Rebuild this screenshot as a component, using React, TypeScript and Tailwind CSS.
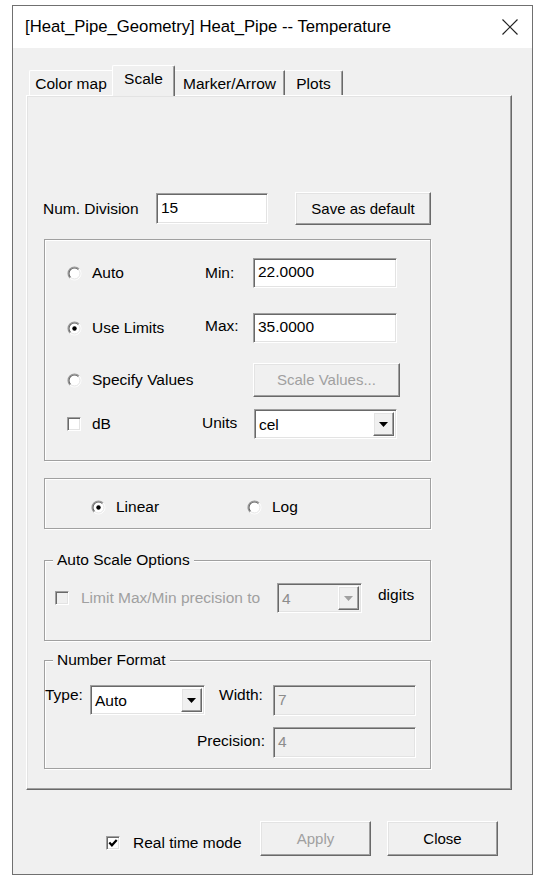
import React from 'react';

const sunken =
  'border border-t-[#a0a0a0] border-l-[#a0a0a0] border-b-white border-r-white shadow-[inset_1px_1px_0_#696969,inset_-1px_-1px_0_#e3e3e3]';
const raised =
  'border border-t-white border-l-white border-b-[#696969] border-r-[#696969] shadow-[inset_-1px_-1px_0_#a0a0a0,inset_1px_1px_0_#e3e3e3]';
const etched = 'border border-[#a0a0a0] shadow-[inset_1px_1px_0_#fff,1px_1px_0_#fff]';

function Radio({ checked }: { checked?: boolean }) {
  return (
    <svg width="15" height="15" viewBox="0 0 15 15" className="shrink-0 -ml-[1px]">
      <circle cx="7.5" cy="7.5" r="6.5" fill="#fff" />
      <path d="M2.9 12.1A6.5 6.5 0 0 1 12.1 2.9" fill="none" stroke="#9a9a9a" strokeWidth="1.1" />
      <path d="M3.6 11.4A5.5 5.5 0 0 1 11.4 3.6" fill="none" stroke="#5f5f5f" strokeWidth="1.1" />
      <path d="M12.1 2.9A6.5 6.5 0 0 1 2.9 12.1" fill="none" stroke="#fff" />
      <path d="M11.4 3.6A5.5 5.5 0 0 1 3.6 11.4" fill="none" stroke="#e3e3e3" />
      {checked && <circle cx="7.5" cy="7.5" r="2.2" fill="#000" />}
    </svg>
  );
}

function Check({ checked, disabled }: { checked?: boolean; disabled?: boolean }) {
  return (
    <span
      className={`w-[14px] h-[14px] shrink-0 flex items-center justify-center ${sunken} ${
        disabled ? 'bg-[#f0f0f0]' : 'bg-white'
      }`}
    >
      {checked && (
        <svg width="10" height="10" viewBox="0 0 10 10">
          <path d="M1.3 4.6L3.9 7.3L8.7 2" stroke="#000" strokeWidth="2.2" fill="none" />
        </svg>
      )}
    </span>
  );
}

function Select({ value, className, disabled }: { value: string; className: string; disabled?: boolean }) {
  return (
    <div
      className={`${sunken} ${className} flex items-center ${
        disabled ? 'bg-[#f0f0f0] text-[#8c8c8c]' : 'bg-white'
      }`}
    >
      <span className="flex-1 pl-[4px] pt-[2px]">{value}</span>
      <span className={`${raised} bg-[#f0f0f0] w-[21px] h-[24px] mr-[2px] flex items-center justify-center`}>
        <svg width="9" height="5" viewBox="0 0 9 5">
          <path d="M0 0H9L4.5 5Z" fill={disabled ? '#a0a0a0' : '#000'} />
        </svg>
      </span>
    </div>
  );
}

function Edit({ value, className, disabled }: { value: string; className: string; disabled?: boolean }) {
  return (
    <div
      className={`${sunken} ${className} flex items-center pl-[4px] pb-[2px] ${
        disabled ? 'bg-[#f0f0f0] text-[#8c8c8c]' : 'bg-white'
      }`}
    >
      {value}
    </div>
  );
}

function Button({ label, className, disabled }: { label: string; className: string; disabled?: boolean }) {
  return (
    <div
      className={`${raised} ${className} bg-[#f0f0f0] flex items-center justify-center text-[15px] ${
        disabled ? 'text-[#a0a0a0]' : ''
      }`}
    >
      {label}
    </div>
  );
}

export default function App() {
  return (
    <div className="w-[539px] h-[882px] bg-white pt-[5px] pl-[12px] font-['Liberation_Sans',Arial,sans-serif] text-[15.5px] leading-[18px] text-black">
      <div className="w-[521px] h-[870px] border border-[#707070] flex flex-col bg-[#f0f0f0]">
        {/* Title bar */}
        <div className="h-[42px] bg-white flex items-center justify-between pl-[12px] pr-[14px] shrink-0">
          <span className="text-[16.7px]">[Heat_Pipe_Geometry] Heat_Pipe -- Temperature</span>
          <svg width="16" height="16" viewBox="0 0 16 16">
            <path d="M0.5 0.5L15.5 15.5M15.5 0.5L0.5 15.5" stroke="#222" strokeWidth="1.2" />
          </svg>
        </div>

        <div className="pl-[13px] pt-[17px]">
          {/* Tabs */}
          <div className="flex items-end h-[30px] pl-[3px]">
            <div className="w-[83px] h-[25px] border-t border-l border-t-white border-l-white rounded-tl-[2px] flex items-center justify-center pt-[2px]">
              Color map
            </div>
            <div className="relative z-10 w-[63px] h-[31px] -mb-[1px] bg-[#f0f0f0] border-t border-l border-r border-t-white border-l-white border-r-[#696969] shadow-[inset_-1px_0_0_#a0a0a0] rounded-t-[2px] flex justify-center pt-[4px]">
              Scale
            </div>
            <div className="w-[110px] h-[25px] border-t border-r border-t-white border-r-[#696969] shadow-[inset_-1px_0_0_#a0a0a0] flex items-center justify-center pt-[2px]">
              Marker/Arrow
            </div>
            <div className="w-[58px] h-[25px] border-t border-r border-t-white border-r-[#696969] shadow-[inset_-1px_0_0_#a0a0a0] rounded-tr-[2px] flex items-center justify-center pt-[2px]">
              Plots
            </div>
          </div>

          {/* Panel */}
          <div className="w-[486px] h-[695px] border border-t-white border-l-white border-b-[#696969] border-r-[#696969] shadow-[inset_-1px_-1px_0_#a0a0a0,inset_1px_1px_0_#e3e3e3] pl-[17px] pt-[96px]">
            <div className="flex items-center h-[33px]">
              <span className="w-[112px] -ml-[1px]">Num. Division</span>
              <Edit value="15" className="w-[112px] h-[31px] ml-[1px]" />
              <Button label="Save as default" className="w-[136px] h-[33px] ml-[27px]" />
            </div>

            {/* Limits group */}
            <div className={`${etched} w-[387px] h-[222px] mt-[14px] pl-[23px] pt-[18px]`}>
              <div className="flex items-center h-[30px]">
                <Radio />
                <span className="w-[113px] ml-[10px]">Auto</span>
                <span className="w-[48px]">Min:</span>
                <Edit value="22.0000" className="w-[144px] h-[30px]" />
              </div>
              <div className="flex items-center h-[30px] mt-[25px]">
                <Radio checked />
                <span className="w-[113px] ml-[10px]">Use Limits</span>
                <span className="w-[48px] -mt-[4px]">Max:</span>
                <Edit value="35.0000" className="w-[144px] h-[30px]" />
              </div>
              <div className="flex items-center h-[34px] mt-[20px]">
                <Radio />
                <span className="w-[113px] ml-[10px]">Specify Values</span>
                <span className="w-[48px]" />
                <Button label="Scale Values..." className="w-[147px] h-[34px]" disabled />
              </div>
              <div className="flex items-center h-[30px] mt-[12px] -ml-[1px]">
                <Check />
                <span className="w-[110px] ml-[11px]">dB</span>
                <span className="w-[52px] -mt-[3px]">Units</span>
                <Select value="cel" className="w-[143px] h-[30px]" />
              </div>
            </div>

            {/* Linear / Log */}
            <div className={`${etched} w-[387px] h-[51px] mt-[17px] pl-[47px] pt-[7px] flex items-center`}>
              <Radio checked />
              <span className="w-[132px] ml-[10px]">Linear</span>
              <Radio />
              <span className="ml-[10px]">Log</span>
            </div>

            {/* Auto Scale Options */}
            <div className={`${etched} w-[387px] h-[81px] mt-[31px]`}>
              <div className="-mt-[10px] ml-[8px] px-[4px] w-fit bg-[#f0f0f0]">Auto Scale Options</div>
              <div className="flex items-center h-[30px] mt-[14px] pl-[10px]">
                <Check disabled />
                <span className="w-[196px] ml-[12px] text-[#a0a0a0]">Limit Max/Min precision to</span>
                <Select value="4" className="w-[85px] h-[30px]" disabled />
                <span className="ml-[16px] -mt-[6px]">digits</span>
              </div>
            </div>

            {/* Number Format */}
            <div className={`${etched} w-[387px] h-[109px] mt-[19px]`}>
              <div className="-mt-[10px] ml-[8px] px-[4px] w-fit bg-[#f0f0f0]">Number Format</div>
              <div className="flex items-start h-[31px] mt-[16px]">
                <span className="w-[45px] pt-[1px]">Type:</span>
                <Select value="Auto" className="w-[115px] h-[30px]" />
                <span className="w-[54px] ml-[14px] pt-[1px]">Width:</span>
                <Edit value="7" className="w-[143px] h-[31px]" disabled />
              </div>
              <div className="flex items-center h-[31px] mt-[11px]">
                <span className="w-[228px] text-right pr-[8px] -mt-[4px]">Precision:</span>
                <Edit value="4" className="w-[143px] h-[31px]" disabled />
              </div>
            </div>
          </div>

          {/* Bottom row */}
          <div className="flex items-center h-[35px] mt-[31px] pl-[80px]">
            <span className="flex items-center mt-[9px]">
              <Check checked />
              <span className="w-[127px] ml-[13px]">Real time mode</span>
            </span>
            <Button label="Apply" className="w-[111px] h-[35px]" disabled />
            <Button label="Close" className="w-[111px] h-[35px] ml-[16px]" />
          </div>
        </div>
      </div>
    </div>
  );
}
